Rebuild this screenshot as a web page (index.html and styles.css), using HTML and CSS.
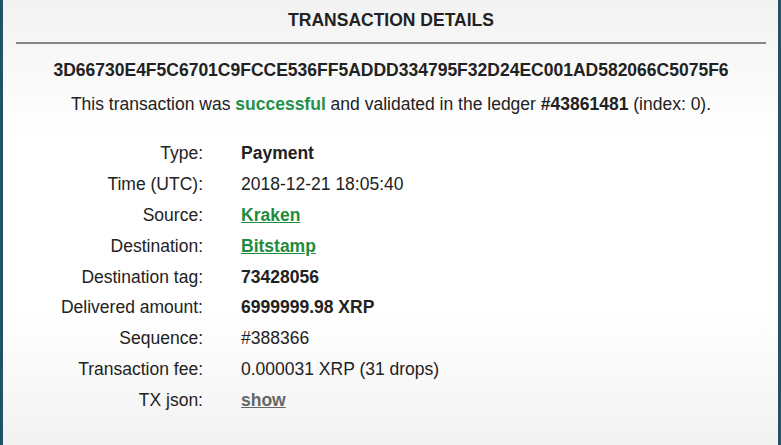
FILE: index.html
```html
<!DOCTYPE html>
<html>
<head>
<meta charset="utf-8">
<link rel="stylesheet" href="styles.css">
</head>
<body>
<div class="panel">
  <div class="content">
    <h1 class="title">TRANSACTION DETAILS</h1>
    <div class="hash">3D66730E4F5C6701C9FCCE536FF5ADDD334795F32D24EC001AD582066C5075F6</div>
    <p class="summary">This transaction was <span class="ok">successful</span> and validated in the ledger <b>#43861481</b> (index: 0).</p>
    <div class="details">
      <div class="label">Type:</div><div class="value"><b>Payment</b></div>
      <div class="label">Time (UTC):</div><div class="value">2018-12-21 18:05:40</div>
      <div class="label">Source:</div><div class="value"><a class="acct" href="#">Kraken</a></div>
      <div class="label">Destination:</div><div class="value"><a class="acct" href="#">Bitstamp</a></div>
      <div class="label">Destination tag:</div><div class="value"><b>73428056</b></div>
      <div class="label">Delivered amount:</div><div class="value"><b>6999999.98 XRP</b></div>
      <div class="label">Sequence:</div><div class="value">#388366</div>
      <div class="label">Transaction fee:</div><div class="value">0.000031 XRP (31 drops)</div>
      <div class="label">TX json:</div><div class="value"><a class="show" href="#">show</a></div>
    </div>
  </div>
</div>
</body>
</html>
```
FILE: styles.css
```css
html, body {
  margin: 0;
  padding: 0;
}
body {
  font-family: "Liberation Sans", Arial, sans-serif;
  font-size: 17.5px;
  color: #222;
}
.panel {
  height: 445px;
  box-sizing: border-box;
  border-left: 3px solid #1e5468;
  border-right: 3px solid #1e5468;
  background: linear-gradient(#f2f2f2 0%, #ffffff 30%, #ffffff 70%, #f2f2f2 100%);
  overflow: hidden;
}
.content {
  padding: 0 12px 0 13px;
}
.title {
  margin: 0;
  padding: 10px 0 12px;
  font-size: 17.5px;
  line-height: 20px;
  font-weight: bold;
  text-align: center;
  color: #222;
  border-bottom: 2px solid #888;
}
.hash {
  margin-top: 16px;
  font-weight: bold;
  line-height: 20px;
  text-align: center;
}
.summary {
  margin: 14px 0 0;
  line-height: 20px;
  text-align: center;
}
.ok {
  color: #23914a;
  font-weight: bold;
}
.details {
  display: grid;
  grid-template-columns: 187px 1fr;
  column-gap: 38px;
  grid-auto-rows: 30.9px;
  align-items: center;
  margin-top: 23.5px;
}
.label {
  text-align: right;
  line-height: 20px;
}
.value {
  line-height: 20px;
}
.acct {
  color: #1f8b3e;
  font-weight: bold;
  text-decoration: underline;
}
.show {
  color: #666;
  font-weight: bold;
  text-decoration: underline;
}
```
